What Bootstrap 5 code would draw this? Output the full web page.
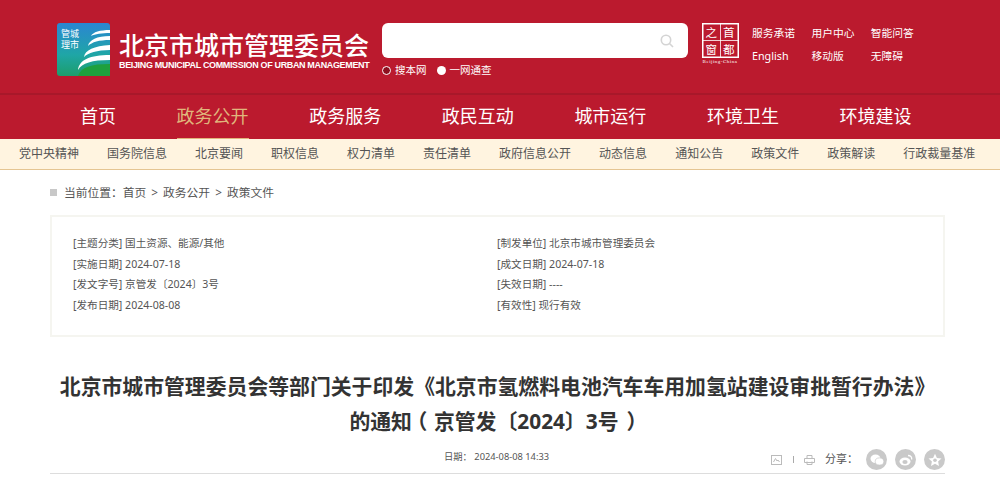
<!DOCTYPE html>
<html lang="zh-CN">
<head>
  <meta charset="UTF-8" />
  <title>北京市城市管理委员会</title>
  <link href="https://cdn.jsdelivr.net/npm/bootstrap@5.3.0/dist/css/bootstrap.min.css" rel="stylesheet" />
  <style>
    html, body { height: 478px; overflow: hidden; }
    body {
      font-family: "Noto Sans", "Noto Sans CJK SC", sans-serif;
      background: #fff;
      color: #444;
    }
    a { color: inherit; text-decoration: none; }

    .site-head { height: 95px; background: #bb1a2e; padding-left: 57px; border-bottom: 2px solid #a8182a; }
    .logo-box { width: 53px; height: 53px; margin-top: 23px; }
    .logo-text { margin: 30px 0 0 9px; width: 252px; color: #fff; }
    .logo-cn { font-size: 25px; line-height: 30px; font-weight: 500; white-space: nowrap; }
    .logo-en { font-family: "Liberation Sans", sans-serif; font-size: 9px; line-height: 10px; font-weight: 700; white-space: nowrap; letter-spacing: -.35px; margin-top: 0; }

    .search-area { width: 306px; margin: 23px 0 0 11px; }
    .search-box { height: 35px; background: #fff; border-radius: 6px; padding-right: 14px; }
    .search-opts { color: #fff; font-size: 10.5px; line-height: 14px; margin-top: 5px; }
    .radio-dot { width: 9px; height: 9px; border-radius: 50%; background: #fff; margin-right: 4px; }
    .radio-dot.is-off { background: #8e0f1f; border: 1px solid #fff; }
    .radio-second { margin-left: 10px; }

    .capital-logo { width: 38px; margin: 23px 0 0 13px; }
    .capital-cap { font-family: "Liberation Serif", serif; color: #fff; font-size: 5px; line-height: 6px; letter-spacing: .5px; text-align: center; white-space: nowrap; margin-top: 1px; }
    .head-links { margin: 26px 0 0 13px; display: grid; grid-template-columns: repeat(3, 59.4px); align-content: start; row-gap: 9px; color: #fff; font-size: 10.75px; line-height: 14px; }

    .main-nav { height: 44px; background: #bb1a2e; padding-left: 80px; gap: 60.6px; }
    .main-nav a { color: #fff; font-size: 18px; line-height: 42px; height: 44px; }
    .main-nav a.is-active { color: #e0b67c; border-bottom: 1px solid #e0b67c; }

    .sub-nav { height: 31px; background: #fff4e0; border-bottom: 1px solid #e5c592; padding-left: 19px; gap: 28px; }
    .sub-nav a { color: #555; font-size: 12px; line-height: 30px; white-space: nowrap; }

    .crumb { margin: 14px 0 0 50px; height: 16px; font-size: 11.75px; line-height: 16px; word-spacing: 2px; color: #555; }
    .crumb-mark { width: 7px; height: 7px; background: #c8c8c8; margin-right: 7px; }

    .meta-box { margin: 15px 55px 0 50px; height: 122px; border: 2px solid #f5f5f0; padding: 16px 21px; }
    .meta-line { font-size: 10.6px; line-height: 20.6px; color: #555; white-space: nowrap; }
    .meta-col { width: 424px; }

    .doc-title { margin: 32px 55px 0 50px; text-align: center; font-size: 20.85px; line-height: 35px; font-weight: 700; color: #333; white-space: nowrap; }
    .paren-open, .paren-close { font-feature-settings: "halt"; }
    .paren-open { margin: 0 6.6px 0 5px; }
    .paren-close { margin: 0 8.6px 0 8px; }
    .doc-info { margin: 11px 55px 0 50px; height: 24px; border-bottom: 1px solid #ddd; padding-bottom: 4px; }
    .doc-date { margin: 0 0 5px 394px; font-size: 9.3px; line-height: 14px; color: #555; }
    .tool-sep { width: 1px; height: 7px; background: #aaa; margin: 0 10px 0 11px; }
    .share-label { font-size: 11px; color: #555; margin-left: 10px; }
    .share-dot { width: 21px; height: 21px; border-radius: 50%; background: #c9c9c9; margin-left: 8px; }
  </style>
</head>
<body>

  <header class="site-head d-flex">
    <svg class="logo-box flex-shrink-0" viewBox="0 0 53 53">
      <defs>
        <linearGradient id="logoBg" x1="0" y1="0" x2="0" y2="1">
          <stop offset="0" stop-color="#2b86d2" />
          <stop offset=".6" stop-color="#1fa6a6" />
          <stop offset="1" stop-color="#1c9e6b" />
        </linearGradient>
      </defs>
      <rect width="53" height="53" rx="3" fill="url(#logoBg)" />
      <path d="M21 53C24 44 34 41 53 41V53Z" fill="#1ea03d" />
      <path d="M21 47C22 37 33 32 53 32V37C35 37 25 40 21 47Z" fill="#fff" />
      <path d="M27 34C28 27 37 23 53 22V27C40 27 31 30 27 34Z" fill="#fff" />
      <path d="M31 23C32 17 40 13 53 13V17C42 17 35 19 31 23Z" fill="#fff" />
      <path d="M34 13C36 9 43 7 53 7V10C45 10 38 11 34 13Z" fill="#fff" />
      <text x="4" y="14" font-size="9" fill="#fff">管城</text>
      <text x="4" y="25" font-size="9" fill="#fff">理市</text>
    </svg>
    <div class="logo-text flex-shrink-0">
      <div class="logo-cn">北京市城市管理委员会</div>
      <div class="logo-en">BEIJING MUNICIPAL COMMISSION OF URBAN MANAGEMENT</div>
    </div>

    <div class="search-area flex-shrink-0">
      <div class="search-box d-flex align-items-center justify-content-end">
        <svg width="14" height="14" viewBox="0 0 14 14" fill="none" stroke="#d4d4d4" stroke-width="1.6">
          <circle cx="6" cy="6" r="4.7" />
          <path d="M9.5 9.5 13 13" />
        </svg>
      </div>
      <div class="search-opts d-flex align-items-center">
        <span class="radio-dot is-off"></span><span>搜本网</span>
        <span class="radio-dot radio-second"></span><span>一网通查</span>
      </div>
    </div>

    <div class="capital-logo flex-shrink-0">
      <svg class="d-block mx-auto" width="37" height="35" viewBox="0 0 37 35">
        <rect x=".75" y=".75" width="35.5" height="33.5" fill="none" stroke="#fff" stroke-width="1.5" />
        <path d="M18.5 1V34M1 17.5H36" stroke="#fff" stroke-width=".8" />
        <text x="3.5" y="14" font-size="11.5" fill="#fff">之</text>
        <text x="21" y="14" font-size="11.5" fill="#fff">首</text>
        <text x="3.5" y="31" font-size="11.5" fill="#fff">窗</text>
        <text x="21" y="31" font-size="11.5" fill="#fff">都</text>
      </svg>
      <div class="capital-cap">Beijing-China</div>
    </div>

    <div class="head-links">
      <a href="#">服务承诺</a><a href="#">用户中心</a><a href="#">智能问答</a>
      <a href="#">English</a><a href="#">移动版</a><a href="#">无障碍</a>
    </div>
  </header>

  <nav class="main-nav d-flex">
    <a href="#">首页</a>
    <a href="#" class="is-active">政务公开</a>
    <a href="#">政务服务</a>
    <a href="#">政民互动</a>
    <a href="#">城市运行</a>
    <a href="#">环境卫生</a>
    <a href="#">环境建设</a>
  </nav>

  <nav class="sub-nav d-flex">
    <a href="#">党中央精神</a>
    <a href="#">国务院信息</a>
    <a href="#">北京要闻</a>
    <a href="#">职权信息</a>
    <a href="#">权力清单</a>
    <a href="#">责任清单</a>
    <a href="#">政府信息公开</a>
    <a href="#">动态信息</a>
    <a href="#">通知公告</a>
    <a href="#">政策文件</a>
    <a href="#">政策解读</a>
    <a href="#">行政裁量基准</a>
  </nav>

  <div class="crumb d-flex align-items-center">
    <span class="crumb-mark"></span>
    <span>当前位置：首页 &gt; 政务公开 &gt; 政策文件</span>
  </div>

  <section class="meta-box d-flex">
    <div class="meta-col">
      <div class="meta-line">[主题分类] 国土资源、能源/其他</div>
      <div class="meta-line">[实施日期] 2024-07-18</div>
      <div class="meta-line">[发文字号] 京管发〔2024〕3号</div>
      <div class="meta-line">[发布日期] 2024-08-08</div>
    </div>
    <div class="meta-col">
      <div class="meta-line">[制发单位] 北京市城市管理委员会</div>
      <div class="meta-line">[成文日期] 2024-07-18</div>
      <div class="meta-line">[失效日期] ----</div>
      <div class="meta-line">[有效性] 现行有效</div>
    </div>
  </section>

  <h1 class="doc-title">北京市城市管理委员会等部门关于印发《北京市氢燃料电池汽车车用加氢站建设审批暂行办法》<br>的通知<span class="paren-open">（</span>京管发〔2024〕3号<span class="paren-close">）</span></h1>

  <div class="doc-info d-flex align-items-center">
    <span class="doc-date">日期： 2024-08-08 14:33</span>
    <div class="d-flex align-items-center ms-auto">
      <svg width="11" height="10" viewBox="0 0 11 10" fill="none" stroke="#bbb">
        <rect x=".5" y=".5" width="10" height="9" />
        <path d="M2.5 7 4.5 3.5 6 6 7 5 8.5 7" />
      </svg>
      <span class="tool-sep"></span>
      <svg width="11" height="10" viewBox="0 0 11 10" fill="none" stroke="#bbb">
        <path d="M3 3V.5H8V3M.5 3.5H10.5V7.5H.5ZM3 6.5V9.5H8V6.5" />
      </svg>
      <span class="share-label">分享：</span>
      <span class="share-dot d-flex align-items-center justify-content-center">
        <svg width="14" height="12" viewBox="0 0 14 12" fill="#fff">
          <ellipse cx="5.5" cy="4.7" rx="5" ry="4.2" />
          <ellipse cx="9.5" cy="7.5" rx="4.3" ry="3.6" stroke="#c9c9c9" stroke-width=".7" />
        </svg>
      </span>
      <span class="share-dot d-flex align-items-center justify-content-center">
        <svg width="14" height="12" viewBox="0 0 14 12">
          <ellipse cx="6" cy="7.5" rx="5.5" ry="4" fill="#fff" />
          <ellipse cx="6" cy="8" rx="2.6" ry="2" fill="#c9c9c9" />
          <path d="M9 1.5C11.5 1.5 13 3 12.7 5.5" fill="none" stroke="#fff" stroke-width="1.3" />
        </svg>
      </span>
      <span class="share-dot d-flex align-items-center justify-content-center">
        <svg width="14" height="14" viewBox="0 0 14 14" fill="#fff">
          <path d="M7 .8 8.9 5 13.5 5.5 10.1 8.6 11 13.1 7 10.8 3 13.1 3.9 8.6.5 5.5 5.1 5Z" />
          <circle cx="7" cy="7.3" r="1.8" fill="#c9c9c9" />
        </svg>
      </span>
    </div>
  </div>

  <script src="https://cdn.jsdelivr.net/npm/bootstrap@5.3.0/dist/js/bootstrap.bundle.min.js"></script>
</body>
</html>
